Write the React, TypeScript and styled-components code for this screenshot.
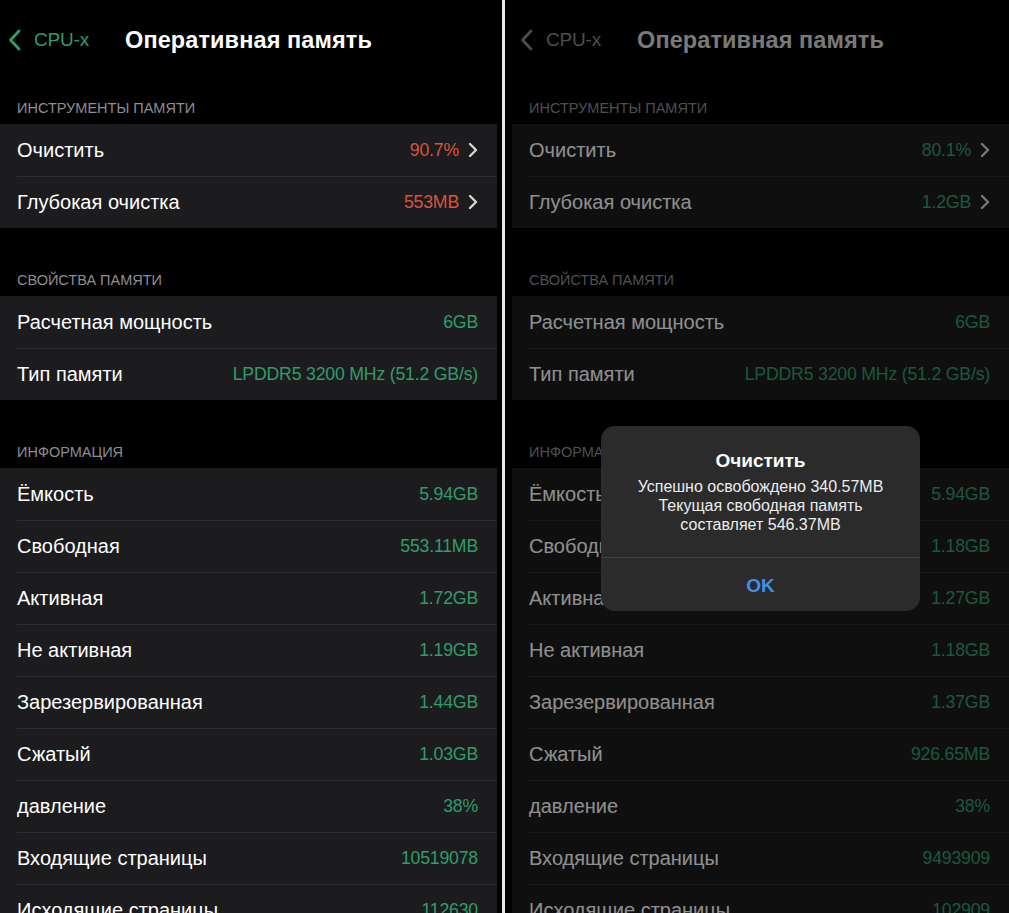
import React from "react";
import styled, { createGlobalStyle } from "styled-components";

const GlobalStyle = createGlobalStyle`
  html, body {
    margin: 0;
    padding: 0;
    background: #000;
  }
  * {
    box-sizing: border-box;
  }
`;

type Tone = "green" | "red";

interface IRow {
  label: string;
  value: string;
  tone?: Tone;
  chevron?: boolean;
}

interface ISection {
  title: string;
  rows: IRow[];
}

const toneColor: Record<Tone, string> = {
  green: "#2f9c6c",
  red: "#d9533f",
};

const Page = styled.div`
  display: flex;
  width: 1009px;
  height: 913px;
  overflow: hidden;
  background: #000;
  font-family: "Liberation Sans", Arial, sans-serif;
`;

const Divider = styled.div`
  width: 3px;
  margin: 0 7px 0 5px;
  background: #e9e9e9;
  flex-shrink: 0;
`;

const Screen = styled.div`
  position: relative;
  width: 497px;
  flex-shrink: 0;
  overflow: hidden;
  background: #000;
`;

const NavBar = styled.div`
  display: grid;
  grid-template-columns: 1fr auto 1fr;
  align-items: center;
  height: 56px;
  padding-top: 23px;
`;

const BackButton = styled.div<{ $dim?: boolean }>`
  display: flex;
  align-items: center;
  gap: 13px;
  height: 24px;
  margin-left: 8px;
  color: ${({ $dim }) => ($dim ? "#8a8a8a" : "#2f9c6c")};
  font-size: 19px;
  letter-spacing: -0.2px;
`;

const NavTitle = styled.div<{ $dim?: boolean }>`
  color: ${({ $dim }) => ($dim ? "#d8d8d8" : "#fff")};
  font-size: 23.5px;
  font-weight: 700;
  line-height: 24px;
  letter-spacing: 0.1px;
`;

const SectionHeader = styled.div`
  display: flex;
  align-items: flex-end;
  height: 68px;
  padding: 0 0 7px 17px;
  color: #8d8d92;
  font-size: 14.5px;
  line-height: 18px;
  text-transform: uppercase;
`;

const Group = styled.div`
  background: #1c1c1e;
`;

const Row = styled.div`
  position: relative;
  display: flex;
  align-items: center;
  justify-content: space-between;
  height: 52px;
  padding: 0 19px 0 17px;

  & + &::before {
    content: "";
    position: absolute;
    top: 0;
    left: 17px;
    right: 0;
    height: 1px;
    background: #2d2d30;
  }
`;

const Label = styled.span`
  color: #fff;
  font-size: 20px;
`;

const ValueWrap = styled.span`
  display: flex;
  align-items: center;
  gap: 9px;
`;

const Value = styled.span<{ $tone: Tone }>`
  color: ${({ $tone }) => toneColor[$tone]};
  font-size: 17.7px;
  letter-spacing: -0.2px;
`;

const Dim = styled.div`
  position: absolute;
  inset: 0;
  background: rgba(0, 0, 0, 0.44);
`;

const Alert = styled.div`
  position: absolute;
  top: 426px;
  left: 89px;
  width: 319px;
  border-radius: 14px;
  background: #2b2b2c;
  text-align: center;
  overflow: hidden;
`;

const AlertBody = styled.div`
  padding: 24px 12px 23px;
`;

const AlertTitle = styled.div`
  color: #fff;
  font-size: 19px;
  font-weight: 700;
  line-height: 22px;
  margin-bottom: 5px;
`;

const AlertText = styled.div`
  color: #ececec;
  font-size: 16px;
  line-height: 19px;
`;

const AlertButton = styled.div`
  display: flex;
  align-items: center;
  justify-content: center;
  height: 54px;
  padding-top: 2px;
  border-top: 1px solid #424244;
  color: #3f8ff0;
  font-size: 19px;
  font-weight: 700;
`;

const BackChevron: React.FC = () => (
  <svg width="13" height="22" viewBox="0 0 13 22" fill="none">
    <path d="M11 2 L2.5 11 L11 20" stroke="currentColor" strokeWidth="2.8" strokeLinecap="round" strokeLinejoin="round" />
  </svg>
);

const RowChevron: React.FC = () => (
  <svg width="10" height="16" viewBox="0 0 10 16" fill="none">
    <path d="M2 2 L8 8 L2 14" stroke="#d6d6d6" strokeWidth="2.4" strokeLinecap="round" strokeLinejoin="round" />
  </svg>
);

const buildSections = (v: {
  clean: string;
  deep: string;
  tone: Tone;
  info: string[];
}): ISection[] => [
  {
    title: "Инструменты памяти",
    rows: [
      { label: "Очистить", value: v.clean, tone: v.tone, chevron: true },
      { label: "Глубокая очистка", value: v.deep, tone: v.tone, chevron: true },
    ],
  },
  {
    title: "Свойства памяти",
    rows: [
      { label: "Расчетная мощность", value: "6GB" },
      { label: "Тип памяти", value: "LPDDR5 3200 MHz (51.2 GB/s)" },
    ],
  },
  {
    title: "Информация",
    rows: [
      "Ёмкость",
      "Свободная",
      "Активная",
      "Не активная",
      "Зарезервированная",
      "Сжатый",
      "давление",
      "Входящие страницы",
      "Исходящие страницы",
    ].map((label, i) => ({ label, value: v.info[i] })),
  },
];

const before = buildSections({
  clean: "90.7%",
  deep: "553MB",
  tone: "red",
  info: ["5.94GB", "553.11MB", "1.72GB", "1.19GB", "1.44GB", "1.03GB", "38%", "10519078", "112630"],
});

const after = buildSections({
  clean: "80.1%",
  deep: "1.2GB",
  tone: "green",
  info: ["5.94GB", "1.18GB", "1.27GB", "1.18GB", "1.37GB", "926.65MB", "38%", "9493909", "102909"],
});

const MemoryScreen: React.FC<{ sections: ISection[]; alert?: boolean }> = ({ sections, alert }) => (
  <Screen>
    <NavBar>
      <BackButton $dim={alert}>
        <BackChevron />
        CPU-x
      </BackButton>
      <NavTitle $dim={alert}>Оперативная память</NavTitle>
      <span />
    </NavBar>
    {sections.map((section) => (
      <React.Fragment key={section.title}>
        <SectionHeader>{section.title}</SectionHeader>
        <Group>
          {section.rows.map((row) => (
            <Row key={row.label}>
              <Label>{row.label}</Label>
              <ValueWrap>
                <Value $tone={row.tone ?? "green"}>{row.value}</Value>
                {row.chevron && <RowChevron />}
              </ValueWrap>
            </Row>
          ))}
        </Group>
      </React.Fragment>
    ))}
    {alert && (
      <>
        <Dim />
        <Alert>
          <AlertBody>
            <AlertTitle>Очистить</AlertTitle>
            <AlertText>
              Успешно освобождено 340.57MB
              <br />
              Текущая свободная память
              <br />
              составляет 546.37MB
            </AlertText>
          </AlertBody>
          <AlertButton>OK</AlertButton>
        </Alert>
      </>
    )}
  </Screen>
);

const App: React.FC = () => (
  <>
    <GlobalStyle />
    <Page>
      <MemoryScreen sections={before} />
      <Divider />
      <MemoryScreen sections={after} alert />
    </Page>
  </>
);

export default App;
